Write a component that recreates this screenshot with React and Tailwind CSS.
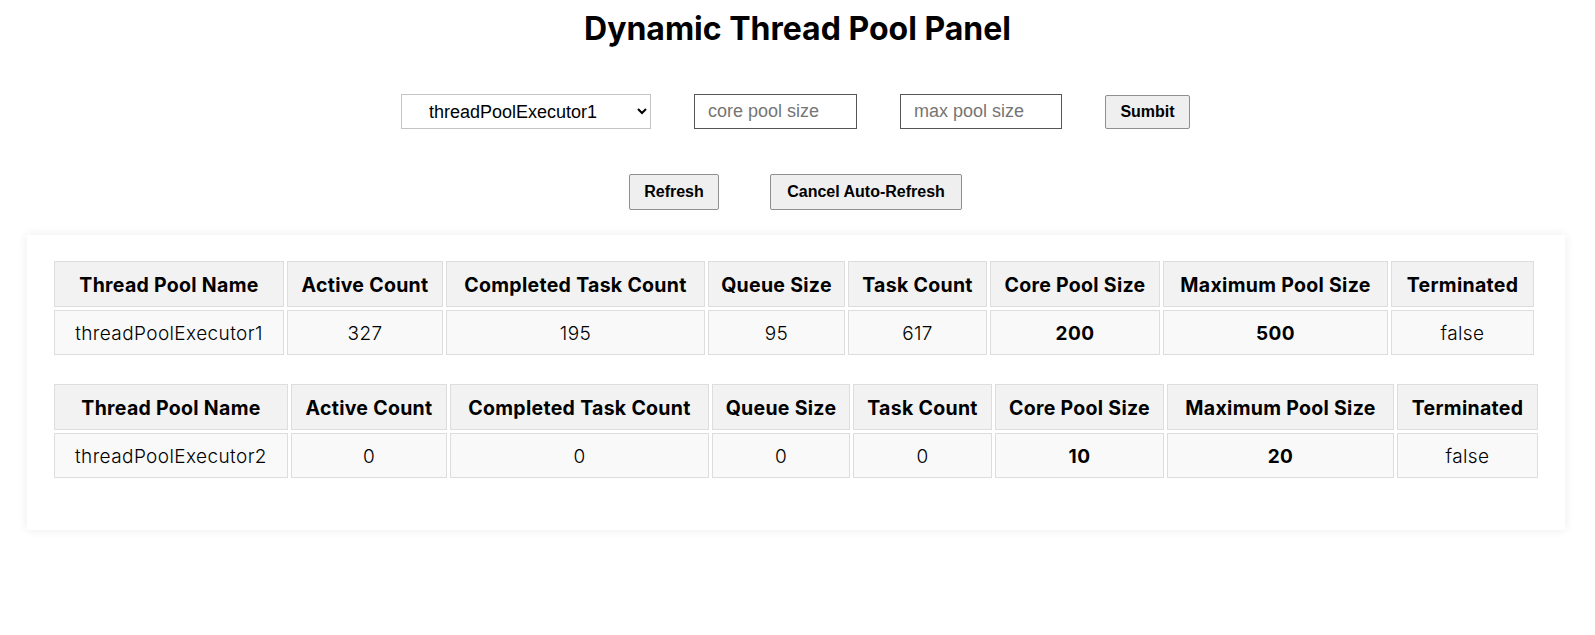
import { useState } from "react";

const headers = [
  "Thread Pool Name",
  "Active Count",
  "Completed Task Count",
  "Queue Size",
  "Task Count",
  "Core Pool Size",
  "Maximum Pool Size",
  "Terminated",
];

const pools = [
  {
    name: "threadPoolExecutor1",
    active: 327,
    completed: 195,
    queue: 95,
    tasks: 617,
    core: 200,
    max: 500,
    terminated: "false",
    tableWidth: "w-[1486px]",
    widths: ["w-[230px]", "w-[156px]", "w-[259px]", "w-[137px]", "w-[139px]", "w-[170px]", "w-[225px]", "w-[143px]"],
  },
  {
    name: "threadPoolExecutor2",
    active: 0,
    completed: 0,
    queue: 0,
    tasks: 0,
    core: 10,
    max: 20,
    terminated: "false",
    tableWidth: "w-[1490px]",
    widths: ["w-[234px]", "w-[156px]", "w-[259px]", "w-[138px]", "w-[139px]", "w-[169px]", "w-[227px]", "w-[141px]"],
  },
];

const tdBase = "bg-[#f9f9f9] border border-[#dddddd] pt-[11px] pb-[9px] leading-[23px] text-[19px] tracking-[0.4px] text-center whitespace-nowrap";

function PoolTable({ pool, className }) {
  const cells = [pool.name, pool.active, pool.completed, pool.queue, pool.tasks];
  return (
    <table className={`table-fixed border-separate border-spacing-[3px] ${pool.tableWidth} ${className}`}>
      <thead>
        <tr>
          {headers.map((h, i) => (
            <th
              key={h}
              className={`${pool.widths[i]} bg-[#f2f2f2] border border-[#dddddd] pt-[12px] pb-[10px] leading-[22px] text-[19.5px] tracking-[0.3px] font-bold text-center whitespace-nowrap`}
            >
              {h}
            </th>
          ))}
        </tr>
      </thead>
      <tbody>
        <tr>
          {cells.map((c, i) => (
            <td key={i} className={`${tdBase} font-light`}>
              {c}
            </td>
          ))}
          <td className={`${tdBase} font-bold`}>{pool.core}</td>
          <td className={`${tdBase} font-bold`}>{pool.max}</td>
          <td className={`${tdBase} font-light`}>{pool.terminated}</td>
        </tr>
      </tbody>
    </table>
  );
}

export default function App() {
  const [pool, setPool] = useState("threadPoolExecutor1");

  return (
    <div className="min-h-screen bg-white text-black font-['Inter',sans-serif]">
      <h1 className="text-center text-[32px] font-bold leading-[36px] pt-[11px]">Dynamic Thread Pool Panel</h1>

      <div className="flex justify-center items-center gap-[43px] mt-[47px] pr-[4px] font-['Liberation_Sans',Arial,sans-serif]">
        <select
          value={pool}
          onChange={(e) => setPool(e.target.value)}
          className="w-[250px] h-[35px] border border-[#c4c4c4] bg-white pl-[23px] pr-[8px] text-[18px]"
        >
          <option value="threadPoolExecutor1">threadPoolExecutor1</option>
          <option value="threadPoolExecutor2">threadPoolExecutor2</option>
        </select>
        <input
          placeholder="core pool size"
          className="w-[163px] h-[35px] border border-[#555555] px-[13px] text-[18px] placeholder:text-[#757575]"
        />
        <input
          placeholder="max pool size"
          className="w-[162px] h-[35px] border border-[#555555] px-[13px] text-[18px] placeholder:text-[#757575]"
        />
        <button className="w-[85px] h-[34px] bg-[#efefef] border border-[#8f8f8f] rounded-[2px] text-[16px] font-bold">
          Sumbit
        </button>
      </div>

      <div className="flex justify-center items-center gap-[51px] mt-[45px] pr-[4px] font-['Liberation_Sans',Arial,sans-serif]">
        <button className="w-[90px] h-[36px] bg-[#efefef] border border-[#8f8f8f] rounded-[2px] text-[16px] font-bold">
          Refresh
        </button>
        <button className="w-[192px] h-[36px] bg-[#efefef] border border-[#8f8f8f] rounded-[2px] text-[16px] font-bold">
          Cancel Auto-Refresh
        </button>
      </div>

      <div className="ml-[27px] mr-[30px] mt-[25px] bg-white shadow-[0_0_10px_rgba(0,0,0,0.08)] pl-[24px] pt-[23px] pb-[49px]">
        <PoolTable pool={pools[0]} className="" />
        <PoolTable pool={pools[1]} className="mt-[23px]" />
      </div>
    </div>
  );
}
